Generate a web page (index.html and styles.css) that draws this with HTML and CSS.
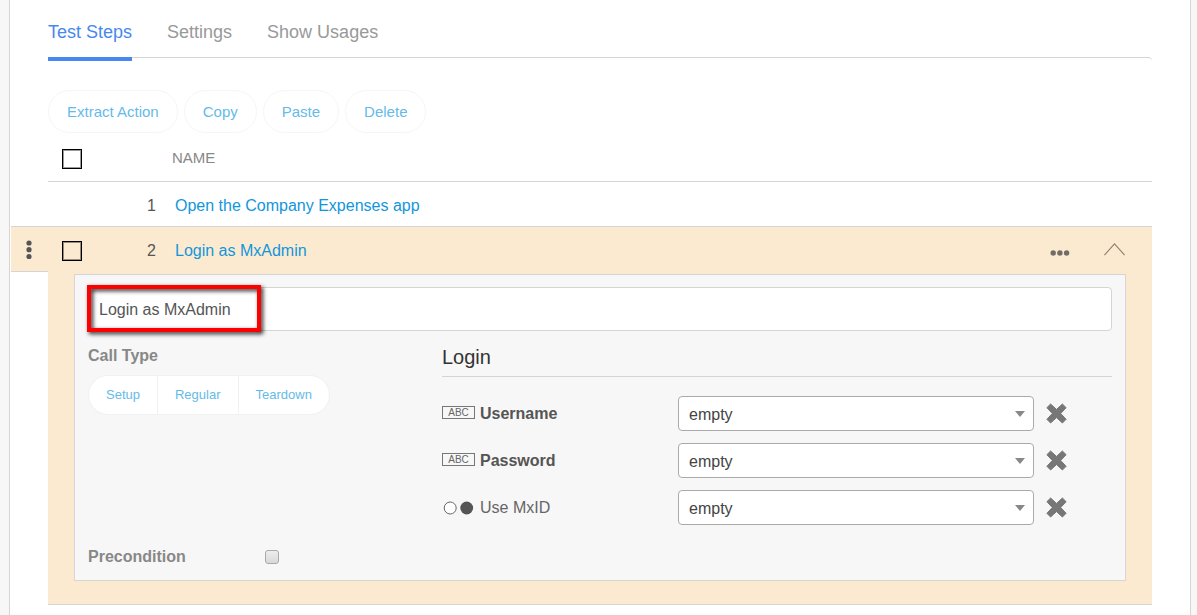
FILE: index.html
```html
<!DOCTYPE html>
<html lang="en">
<head>
<meta charset="utf-8">
<title>Test Steps</title>
<link rel="stylesheet" href="styles.css">
</head>
<body>
<svg class="defs" width="0" height="0" aria-hidden="true">
  <symbol id="cross" viewBox="0 0 21 21"><path d="M4.6 1 10.5 6.4 16.4 1 20.1 4.7 14.7 10.5 20.1 16.3 16.4 20 10.5 14.6 4.6 20 .9 16.3 6.3 10.5.9 4.7z" fill="#777" stroke="#777" stroke-linejoin="round"/></symbol>
  <symbol id="arrow" viewBox="0 0 10 6"><path d="M0 0h10L5 6z" fill="#888"/></symbol>
</svg>
<main class="page">
  <nav class="tabs">
    <a class="tab tab-active" href="#steps">Test Steps</a>
    <a class="tab" href="#settings">Settings</a>
    <a class="tab" href="#usages">Show Usages</a>
  </nav>
  <div class="toolbar">
    <button class="pill" type="button">Extract Action</button>
    <button class="pill" type="button">Copy</button>
    <button class="pill" type="button">Paste</button>
    <button class="pill" type="button">Delete</button>
  </div>
  <table class="steps">
    <colgroup><col class="col-gutter"><col class="col-check"><col class="col-number"><col><col class="col-actions"></colgroup>
    <thead>
      <tr>
        <td class="gutter"></td>
        <th class="check"><input class="box" type="checkbox" aria-label="Select all steps"></th>
        <th></th>
        <th class="name" scope="col">NAME</th>
        <th></th>
      </tr>
    </thead>
    <tbody>
      <tr>
        <td class="gutter gutter-line"></td>
        <td></td>
        <td class="number">1</td>
        <td class="name"><a class="link" href="#step-1">Open the Company Expenses app</a></td>
        <td></td>
      </tr>
      <tr class="selected">
        <td class="handle"><button class="icon-button" type="button" aria-label="Move step"><svg width="6" height="20" viewBox="0 0 6 20" fill="#555"><circle cx="3" cy="3" r="2.6"/><circle cx="3" cy="9.7" r="2.6"/><circle cx="3" cy="16.5" r="2.6"/></svg></button></td>
        <td class="check"><input class="box" type="checkbox" aria-label="Select step 2"></td>
        <td class="number">2</td>
        <td class="name"><a class="link" href="#step-2">Login as MxAdmin</a></td>
        <td>
          <div class="actions">
            <button class="icon-button more" type="button" aria-label="More"><svg width="20" height="6" viewBox="0 0 20 6" fill="#706d66"><circle cx="3.2" cy="3" r="2.7"/><circle cx="9.9" cy="3" r="2.7"/><circle cx="16.6" cy="3" r="2.7"/></svg></button>
            <button class="icon-button" type="button" aria-label="Collapse"><svg width="21" height="13" viewBox="0 0 21 13" fill="none" stroke="#8a8172" stroke-width="1.1"><path d="M.4 12.2 10.5.9 20.6 12.2"/></svg></button>
          </div>
        </td>
      </tr>
      <tr>
        <td class="gutter"></td>
        <td class="detail" colspan="4">
          <form class="panel">
            <div class="title">
              <input class="title-input" type="text" value="Login as MxAdmin" aria-label="Step name">
              <span class="highlight"></span>
            </div>
            <div class="columns">
              <div>
                <h3 class="label">Call Type</h3>
                <div class="segments">
                  <button class="segment" type="button">Setup</button>
                  <button class="segment" type="button">Regular</button>
                  <button class="segment" type="button">Teardown</button>
                </div>
              </div>
              <div>
                <h2 class="heading">Login</h2>
                <div class="params">
                  <div class="param">
                    <label class="param-label param-required" for="username"><span class="abc">ABC</span>Username</label>
                    <div class="select"><select id="username"><option>empty</option></select><svg class="arrow" width="10" height="6"><use href="#arrow"/></svg></div>
                    <button class="icon-button" type="button" aria-label="Clear Username"><svg width="21" height="21"><use href="#cross"/></svg></button>
                  </div>
                  <div class="param">
                    <label class="param-label param-required" for="password"><span class="abc">ABC</span>Password</label>
                    <div class="select"><select id="password"><option>empty</option></select><svg class="arrow" width="10" height="6"><use href="#arrow"/></svg></div>
                    <button class="icon-button" type="button" aria-label="Clear Password"><svg width="21" height="21"><use href="#cross"/></svg></button>
                  </div>
                  <div class="param">
                    <label class="param-label" for="mxid"><svg class="bool" width="33" height="14" viewBox="0 0 33 14"><circle cx="8.2" cy="7" r="6" fill="#fff" stroke="#666"/><circle cx="24.7" cy="7" r="6.4" fill="#555"/></svg>Use MxID</label>
                    <div class="select"><select id="mxid"><option>empty</option></select><svg class="arrow" width="10" height="6"><use href="#arrow"/></svg></div>
                    <button class="icon-button" type="button" aria-label="Clear Use MxID"><svg width="21" height="21"><use href="#cross"/></svg></button>
                  </div>
                </div>
              </div>
            </div>
            <div class="columns precondition">
              <div class="pair">
                <label class="label" for="precondition">Precondition</label>
                <input class="small-box" id="precondition" type="checkbox">
              </div>
            </div>
          </form>
        </td>
      </tr>
    </tbody>
  </table>
</main>
</body>
</html>
```
FILE: styles.css
```css
* { box-sizing: border-box; }

body {
  margin: 0;
  background: #f7f7f7;
  color: #555;
  font: 16px/20px "Liberation Sans", Arial, sans-serif;
}

button, input, select { font: inherit; color: inherit; margin: 0; }

.defs { position: absolute; }

.page {
  min-height: 100vh;
  margin: 0 6px 0 9px;
  padding: 0 38px 10px 1px;
  background: #fff;
  border: solid #d5d5d5;
  border-width: 0 1px;
}

/* Tabs and toolbar */
.tabs {
  position: relative;
  display: flex;
  gap: 35px;
  margin-left: 37px;
}

.tab {
  padding: 21px 0 14px;
  margin-bottom: -4px;
  border-bottom: 4px solid transparent;
  color: #999;
  font-size: 18px;
  line-height: 22px;
  text-decoration: none;
}

.tab-active { color: #4788f0; border-color: #4788f0; }

.toolbar {
  display: flex;
  gap: 6px;
  margin-left: 37px;
  padding-top: 32px;
  border-top: 1px solid #d5d5d5;
  border-top-right-radius: 4px;
}

.pill {
  height: 43px;
  padding: 0 18px;
  background: #fff;
  border: 1px solid #f6f6f6;
  border-radius: 22px;
  color: #64bbe8;
  font-size: 15px;
}

/* Steps table */
.steps {
  width: 100%;
  table-layout: fixed;
  border-collapse: separate;
  border-spacing: 0;
}

.col-gutter { width: 37px; }
.col-check { width: 48px; }
.col-number { width: 60px; }
.col-actions { width: 140px; }

.steps th, .steps td {
  height: 45px;
  padding: 0;
  border-bottom: 1px solid #d5d5d5;
  font-weight: normal;
  text-align: left;
  vertical-align: middle;
}

.steps th { height: 49px; }
.steps .gutter { border-bottom-color: transparent; }
.steps .gutter-line { border-bottom-color: #d5d5d5; }
.steps .check { padding-left: 14px; }
.steps .number { padding-top: 4px; text-align: right; }
.steps .name { padding: 4px 0 0 19px; }
.steps th.name { padding: 2px 0 0 16px; color: #888; font-size: 15px; }
.steps .selected td { background: #fcead0; border-bottom-color: #fcead0; }
.steps .selected .handle { padding-top: 2px; border-bottom-color: #d5d5d5; }

.steps .detail {
  height: auto;
  padding: 2px 26px 23px;
  background: #fcead0;
}

.link { color: #1296db; text-decoration: none; }

.box {
  display: block;
  appearance: none;
  width: 20px;
  height: 20px;
  margin-top: 4px;
  border: 1px solid #000;
  box-shadow: inset 0 0 0 1px rgba(0, 0, 0, 0.4);
}

.steps th .box { background: #fff; }

.icon-button { padding: 0; background: none; border: 0; line-height: 0; }
.icon-button svg { display: block; }
.handle .icon-button { display: block; margin-left: 15px; }

.actions {
  display: flex;
  justify-content: flex-end;
  align-items: center;
  gap: 34px;
  padding-right: 27px;
}

.more { padding-top: 8px; }

/* Step details */
.panel {
  padding: 12px 13px 13px;
  background: #f7f7f7;
  border: 1px solid #d5d5d5;
}

.title { position: relative; }

.title-input {
  display: block;
  width: 100%;
  height: 44px;
  padding: 2px 10px 0;
  background: #fff;
  border: 1px solid #d5d5d5;
  border-radius: 4px;
}

.highlight {
  position: absolute;
  top: -2px;
  left: -1px;
  width: 174px;
  height: 47px;
  border: 4px solid #f00;
  filter: drop-shadow(2px 2px 2px rgba(0, 0, 0, 0.85));
  pointer-events: none;
}

.columns {
  display: grid;
  grid-template-columns: minmax(0, 354fr) minmax(0, 670fr);
  margin-top: 15px;
}

.label { margin: 0; color: #888; font-size: 16px; font-weight: bold; }

.segments { display: flex; margin-top: 9px; }

.segment {
  height: 40px;
  padding: 0 17px;
  background: #fff;
  border: solid #f1f1f1;
  border-width: 1px 0 1px 1px;
  color: #64bbe8;
  font-size: 13px;
}

.segment:first-child { border-radius: 20px 0 0 20px; }
.segment:last-child { border-right-width: 1px; border-radius: 0 20px 20px 0; }

.heading {
  margin: 0;
  padding-bottom: 8px;
  border-bottom: 1px solid #d5d5d5;
  color: #333;
  font-size: 20px;
  font-weight: normal;
  line-height: 22px;
}

.params { display: grid; gap: 12px; margin-top: 19px; }

.param {
  display: grid;
  grid-template-columns: minmax(0, 236fr) minmax(0, 356fr) minmax(0, 78fr);
  align-items: center;
}

.param .icon-button { margin-left: 12px; justify-self: start; }

.param-label { display: flex; align-items: center; gap: 5px; color: #666; }
.param-required { color: #555; font-weight: bold; }

.abc {
  width: 33px;
  margin-bottom: 2px;
  border: 1px solid #777;
  color: #666;
  font-size: 10px;
  font-weight: normal;
  line-height: 11px;
  text-align: center;
}

.select { position: relative; }

.select select {
  display: block;
  appearance: none;
  width: 100%;
  height: 35px;
  padding: 2px 28px 0 10px;
  background: #fff;
  border: 1px solid #aaa;
  border-radius: 4px;
  color: #444;
}

.arrow { position: absolute; top: 15px; right: 9px; pointer-events: none; }

.precondition { margin-top: 22px; }
.pair { display: grid; grid-template-columns: 1fr 1fr; align-items: center; }

.small-box {
  appearance: none;
  width: 14px;
  height: 14px;
  background: linear-gradient(#eee, #d8d8d8);
  border: 1px solid #aaa;
  border-radius: 3px;
}
```
